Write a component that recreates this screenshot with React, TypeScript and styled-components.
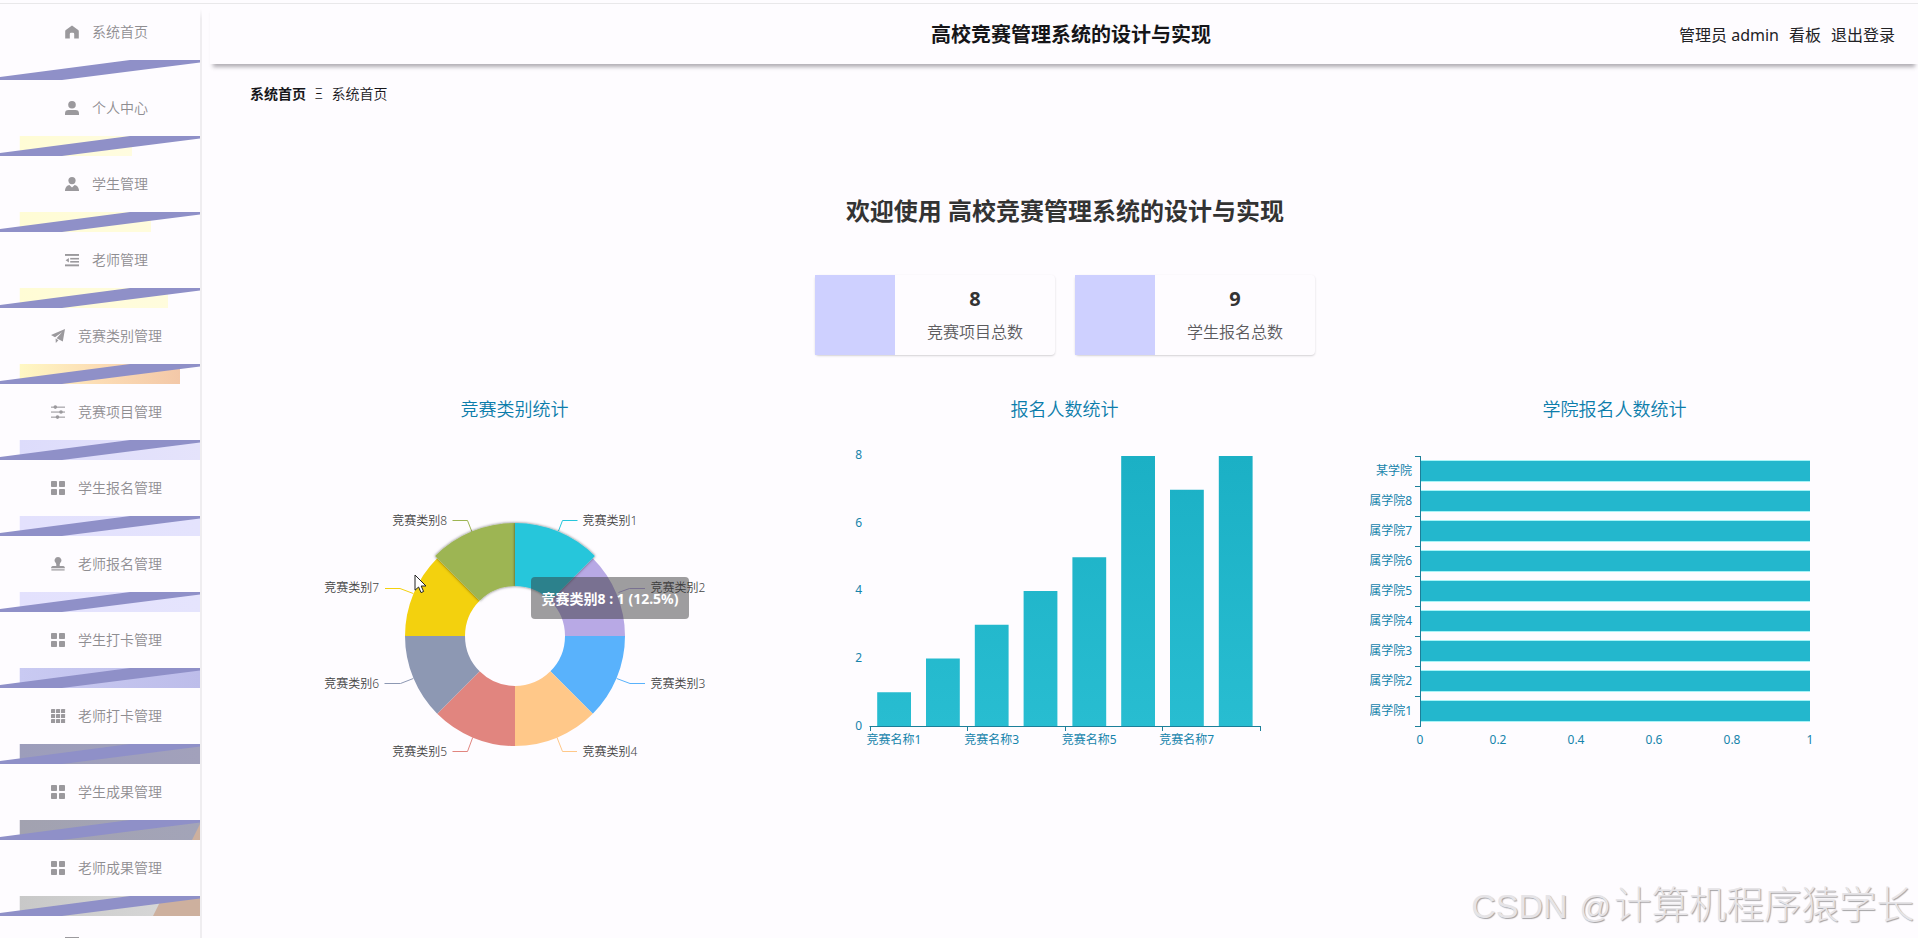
import React from 'react';
import styled, { createGlobalStyle } from 'styled-components';

const FONT = '"Noto Sans", "Noto Sans CJK SC", sans-serif';
const AXIS = '#1684ab';

const GlobalStyle = createGlobalStyle`
  * { box-sizing: border-box; }
  html, body { margin: 0; padding: 0; overflow: hidden; }
  body { background: #fefcff; font-family: ${FONT}; color: #333; }
`;

const Page = styled.div`
  position: relative;
  width: 100%;
  height: 938px;
  padding-top: 3px;
  overflow: hidden;
  display: flex;
  flex-direction: column;
  background: #fefcff;
`;

const TopRule = styled.div`
  flex: none;
  height: 1px;
  background: #e9e8ea;
`;

const Shell = styled.div`
  flex: 1;
  min-height: 0;
  display: flex;
`;

const Sidebar = styled.nav`
  flex: none;
  width: 202px;
  display: flex;
  flex-direction: column;
  overflow: hidden;
  border-right: 2px solid transparent;
  border-image: linear-gradient(to bottom, transparent 6px, #efedf0 16px) 1;
`;

const MenuItem = styled.a`
  flex: none;
  height: 56px;
  padding-left: 8px;
  display: flex;
  align-items: center;
  justify-content: center;
  gap: 8px;
  font-size: 14px;
  line-height: 20px;
  color: #8f8d91;
`;

const MenuIcon = styled.svg`
  width: 24px;
  height: 14px;
  fill: #9b999d;
`;

const MenuLabel = styled.span`
  min-width: 56px;
  font-weight: 350;
`;

const Ribbon = styled.svg`
  flex: none;
  display: block;
  width: 200px;
  height: 20px;
`;

const Main = styled.main`
  flex: 1;
  min-width: 0;
  display: flex;
  flex-direction: column;
`;

const Header = styled.header`
  flex: none;
  height: 60px;
  margin-left: 8px;
  padding: 2px 23px 0 14px;
  display: grid;
  grid-template-columns: 1fr auto 1fr;
  align-items: center;
  box-shadow: 0 6px 4px -3px rgba(60, 55, 65, 0.4);
`;

const SystemTitle = styled.h1`
  grid-column: 2;
  margin: 0 0 0 23px;
  font-size: 20px;
  line-height: 28px;
  font-weight: 700;
  color: #151518;
`;

const UserLinks = styled.div`
  display: flex;
  justify-content: flex-end;
  gap: 10px;
  font-size: 16px;
  line-height: 24px;
  color: #222226;
`;

const Breadcrumb = styled.div`
  flex: none;
  height: 60px;
  padding: 0 0 2px 48px;
  display: flex;
  align-items: center;
  gap: 8.5px;
  font-size: 14px;
  color: #17171b;
`;

const Crumb = styled.span<{ $strong?: boolean }>`
  font-weight: ${(p) => (p.$strong ? 700 : 350)};
`;

const Content = styled.section`
  display: flex;
  flex-direction: column;
  align-items: center;
  padding: 69px 0 0 10px;
`;

const Welcome = styled.h2`
  margin: 0;
  font-size: 24px;
  line-height: 36px;
  font-weight: 700;
  color: #333;
`;

const StatRow = styled.div`
  display: flex;
  gap: 20px;
  margin-top: 46px;
`;

const StatCard = styled.div`
  width: 240px;
  height: 80px;
  display: flex;
  border-radius: 4px;
  background: #fefcff;
  box-shadow: 0 1px 2px rgba(60, 60, 60, 0.22);
`;

const StatSwatch = styled.div`
  width: 80px;
  background: #ced0ff;
`;

const StatBody = styled.div`
  flex: 1;
  display: flex;
  flex-direction: column;
  align-items: center;
  padding-top: 10px;
`;

const StatValue = styled.div`
  font-size: 20px;
  line-height: 28px;
  font-weight: 700;
  color: #333;
`;

const StatLabel = styled.div`
  margin-top: 7px;
  font-size: 16px;
  line-height: 24px;
  font-weight: 350;
  color: #5c5b5e;
`;

const ChartRow = styled.div`
  display: flex;
  gap: 60px;
  margin-top: 41px;
`;

const ChartCard = styled.figure`
  position: relative;
  margin: 0;
  width: 490px;
  height: 400px;
`;

const ChartSvg = styled.svg`
  display: block;
  width: 490px;
  height: 400px;
  overflow: hidden;
  font-family: ${FONT};
  font-size: 12px;
`;

const Tooltip = styled.div`
  position: absolute;
  left: 261px;
  top: 181px;
  width: 158px;
  height: 42px;
  border-radius: 4px;
  background: rgba(50, 50, 50, 0.47);
  color: #fff;
  font-size: 14px;
  line-height: 43px;
  font-weight: 700;
  text-align: center;
  white-space: nowrap;
`;

const Pointer = styled.svg`
  position: absolute;
  left: 144px;
  top: 178px;
  width: 14px;
  height: 21px;
`;

const Watermark = styled.div`
  position: absolute;
  right: 4px;
  bottom: 2px;
  display: flex;
  align-items: baseline;
  font-family: "Liberation Sans", "Noto Sans CJK SC", sans-serif;
  font-size: 37.5px;
  line-height: 56px;
  font-weight: 300;
  color: #e6e4e7;
  text-shadow: 1px 1px 1px #a3a1a4;
  white-space: nowrap;
`;

const WatermarkBrand = styled.span`
  margin-right: 12px;
  font-size: 34px;
`;

const WatermarkAt = styled.span`
  margin-right: 3px;
  font-size: 31px;
`;

const grid4 = (
  <>
    <rect x="0" y="0" width="6" height="6" rx="0.8" />
    <rect x="8" y="0" width="6" height="6" rx="0.8" />
    <rect x="0" y="8" width="6" height="6" rx="0.8" />
    <rect x="8" y="8" width="6" height="6" rx="0.8" />
  </>
);

const icons: Record<string, React.ReactNode> = {
  home: <path d="M7 0.5 L0.8 5 Q0.2 5.5 0.2 6.4 V13.5 H4.8 V9 Q4.8 7.8 6 7.8 H8 Q9.2 7.8 9.2 9 V13.5 H13.8 V6.4 Q13.8 5.5 13.2 5 Z" />,
  user: (
    <>
      <circle cx="7" cy="3.8" r="3.8" />
      <path d="M0 14 V12.4 Q0 9 3.6 9 H10.4 Q14 9 14 12.4 V14 Z" />
    </>
  ),
  custom: (
    <>
      <circle cx="7" cy="3.6" r="3.6" />
      <path d="M0 14 V13 Q0.8 8.6 4.4 8 L7 10.6 L9.6 8 Q13.2 8.6 14 13 V14 Z" />
    </>
  ),
  fold: (
    <>
      <rect x="0" y="1" width="14" height="1.9" />
      <rect x="5.2" y="4.9" width="8.8" height="1.6" />
      <rect x="5.2" y="8" width="8.8" height="1.6" />
      <rect x="0" y="11.4" width="14" height="1.9" />
      <path d="M0.6 7.2 L3.9 4.9 V9.6 Z" />
    </>
  ),
  promotion: (
    <>
      <path d="M14 0 L0 6 L4 8.3 L11 3.2 L5.6 9.2 L11.8 12.6 Z" />
      <path d="M4.6 9.6 L7.4 11.2 L4.8 14 Z" />
    </>
  ),
  operation: (
    <>
      <rect x="0" y="1.6" width="14" height="1.1" />
      <rect x="0" y="6.5" width="14" height="1.1" />
      <rect x="0" y="11.6" width="14" height="1.1" />
      <circle cx="4.3" cy="2.1" r="1.8" />
      <circle cx="10" cy="7" r="1.8" />
      <circle cx="6.5" cy="12.1" r="1.8" />
    </>
  ),
  menu: grid4,
  stamp: (
    <>
      <path d="M7 0 A3.4 3.4 0 0 1 9.2 6 Q8.4 7.6 8.8 9 H12.4 Q14 9.2 14 11.2 H0 Q0 9.2 1.6 9 H5.2 Q5.6 7.6 4.8 6 A3.4 3.4 0 0 1 7 0 Z" />
      <rect x="0.4" y="12.3" width="13.2" height="1.2" />
    </>
  ),
  grid: (
    <>
      {[0, 5, 10].map((y) =>
        [0, 5, 10].map((x) => <rect key={`${x}-${y}`} x={x} y={y} width="4.1" height="4.1" rx="0.4" />)
      )}
    </>
  ),
  tray: <rect x="0" y="0" width="14" height="2" />,
};

type Backdrop = { stops: string[]; end: number; skin?: number };
type Entry = { icon: string; label: string; backdrop?: Backdrop };

const entries: Entry[] = [
  { icon: 'home', label: '系统首页' },
  { icon: 'user', label: '个人中心', backdrop: { stops: ['#fffcd5', '#fffce0'], end: 132 } },
  { icon: 'custom', label: '学生管理', backdrop: { stops: ['#fffcd5', '#fffcdd'], end: 151 } },
  { icon: 'fold', label: '老师管理', backdrop: { stops: ['#fffcd5', '#fffcdd'], end: 168 } },
  { icon: 'promotion', label: '竞赛类别管理', backdrop: { stops: ['#fff8c4', '#fcdcb4', '#f3c8a8'], end: 180 } },
  { icon: 'operation', label: '竞赛项目管理', backdrop: { stops: ['#dddcfb', '#e5e3fb'], end: 200 } },
  { icon: 'menu', label: '学生报名管理', backdrop: { stops: ['#e3e1fd', '#e4e3fd'], end: 200 } },
  { icon: 'stamp', label: '老师报名管理', backdrop: { stops: ['#e3e1fd', '#e5e4fd'], end: 200 } },
  { icon: 'menu', label: '学生打卡管理', backdrop: { stops: ['#c9caf2', '#bdbdea'], end: 200 } },
  { icon: 'grid', label: '老师打卡管理', backdrop: { stops: ['#9c9dbb', '#a2a1bb'], end: 200 } },
  { icon: 'menu', label: '学生成果管理', backdrop: { stops: ['#a2a2b0', '#a3a4b8'], end: 200, skin: 192 } },
  { icon: 'menu', label: '老师成果管理', backdrop: { stops: ['#c8c8c8', '#dadada'], end: 200, skin: 153 } },
  { icon: 'tray', label: '' },
];

function Divider({ backdrop, id }: { backdrop?: Backdrop; id: string }) {
  return (
    <Ribbon viewBox="0 0 200 20">
      {backdrop && (
        <>
          <defs>
            <linearGradient id={id}>
              {backdrop.stops.map((c, i) => (
                <stop key={i} offset={i / (backdrop.stops.length - 1)} stopColor={c} />
              ))}
            </linearGradient>
          </defs>
          <rect x="19.5" y="0" width={backdrop.end - 19.5} height="20" fill={`url(#${id})`} />
          <path d="M0 0 H19.5 V20 H0 Z M19.5 14.4 V20 H0 V17 Z" fill="#fefcff" />
          {backdrop.skin && (
            <path d={`M${backdrop.skin} 20 L${backdrop.skin + 10} 0 H200 V20 Z`} fill="#cdb09e" />
          )}
        </>
      )}
      <path d="M0 17 L130 0 H200 V2.6 L62 20 H0 Z" fill="#8f90c8" />
    </Ribbon>
  );
}

const CX = 245;
const CY = 240;

function sector(index: number, outer: number, inner = 50) {
  const a0 = (index * Math.PI) / 4;
  const a1 = a0 + Math.PI / 4;
  const pt = (a: number, r: number) => `${(CX + r * Math.sin(a)).toFixed(2)} ${(CY - r * Math.cos(a)).toFixed(2)}`;
  return `M${pt(a0, inner)} L${pt(a0, outer)} A${outer} ${outer} 0 0 1 ${pt(a1, outer)} L${pt(a1, inner)} A${inner} ${inner} 0 0 0 ${pt(a0, inner)} Z`;
}

type Slice = { color: string; line: string; x: number; y: number; end?: boolean };

const slices: Slice[] = [
  { color: '#27c6db', line: '288.5,135 292.5,124.5 307.5,124.5', x: 312.5, y: 124 },
  { color: '#b8a9e5', line: '348.5,196.5 359.5,192.5 375,192.5', x: 380.5, y: 191 },
  { color: '#59b2fc', line: '346.7,282.5 360,287.5 375,287.5', x: 380.5, y: 287 },
  { color: '#ffc889', line: '287,341.5 292.5,355.5 307,355.5', x: 312.5, y: 355 },
  { color: '#e1857f', line: '202.7,341.5 197.5,355.5 182.5,355.5', x: 177, y: 355, end: true },
  { color: '#8d98b3', line: '143.3,282.5 130.5,287.5 114.5,287.5', x: 109, y: 287, end: true },
  { color: '#f3d10e', line: '143.3,197.5 130,192.5 115,192.5', x: 109, y: 191, end: true },
  { color: '#9db553', line: '202,136 197.5,124.5 182.5,124.5', x: 177, y: 124, end: true },
];

function ChartTitle({ children }: { children: string }) {
  return (
    <text x="244.5" y="19.5" fontSize="18" fill="#0c7dab" textAnchor="middle" fontWeight="350">
      {children}
    </text>
  );
}

function PieChart() {
  const emphasised = [7, 0];
  return (
    <ChartCard>
      <ChartSvg viewBox="0 0 490 400">
        <defs>
          <filter id="glow" x="-20%" y="-20%" width="140%" height="140%">
            <feDropShadow dx="0" dy="0" stdDeviation="1.5" floodColor="#000" floodOpacity="0.6" />
          </filter>
        </defs>
        <ChartTitle>竞赛类别统计</ChartTitle>
        {slices.map((s, i) => (
          <g key={i}>
            <polyline points={s.line} fill="none" stroke={s.color} strokeWidth="1" />
            <text x={s.x} y={s.y + 4.5} fill="#444" textAnchor={s.end ? 'end' : 'start'} fontWeight="350">
              {`竞赛类别${i + 1}`}
            </text>
          </g>
        ))}
        {slices.map((s, i) => !emphasised.includes(i) && <path key={i} d={sector(i, 110)} fill={s.color} />)}
        {[7, 0].map((i) => (
          <path key={i} d={sector(i, 113)} fill={slices[i].color} filter="url(#glow)" />
        ))}
      </ChartSvg>
      <Tooltip>竞赛类别8 : 1 (12.5%)</Tooltip>
      <Pointer viewBox="0 0 14 21">
        <path d="M1 1 V16.2 L4.6 13 L7 18.6 L9.6 17.5 L7.2 12 H12 Z" fill="#fff" stroke="#222" strokeWidth="1" />
      </Pointer>
    </ChartCard>
  );
}

function SignupChart() {
  const values = [1, 2, 3, 4, 5, 8, 7, 8];
  const step = 48.8;
  return (
    <ChartCard>
      <ChartSvg viewBox="0 0 490 400">
        <defs>
          <linearGradient id="bars" x1="0" y1="60" x2="0" y2="330" gradientUnits="userSpaceOnUse">
            <stop offset="0" stopColor="#1bb0c5" />
            <stop offset="1" stopColor="#28bdd1" />
          </linearGradient>
        </defs>
        <ChartTitle>报名人数统计</ChartTitle>
        {[0, 2, 4, 6, 8].map((v) => (
          <text key={v} x="42" y={333.5 - v * 33.8} fill={AXIS} textAnchor="end">
            {v}
          </text>
        ))}
        {values.map((v, i) => (
          <rect key={i} x={57.2 + i * step} y={330 - v * 33.75} width="33.8" height={v * 33.75} fill="url(#bars)" />
        ))}
        <path
          d="M49.5 330.5 H441 M50.5 330 V335 M147.5 330 V335 M245.5 330 V335 M342.5 330 V335 M440.5 330 V335"
          stroke="#1c7f99"
          fill="none"
        />
        {[1, 3, 5, 7].map((n, i) => (
          <text key={n} x={74 + i * step * 2} y="347.5" fill={AXIS} textAnchor="middle">
            {`竞赛名称${n}`}
          </text>
        ))}
      </ChartSvg>
    </ChartCard>
  );
}

function CollegeChart() {
  const rows = ['某学院', ...[8, 7, 6, 5, 4, 3, 2, 1].map((n) => `所属学院${n}`)];
  return (
    <ChartCard>
      <ChartSvg viewBox="0 0 490 400">
        <ChartTitle>学院报名人数统计</ChartTitle>
        {rows.map((name, i) => (
          <g key={name}>
            <rect x="50" y={64 + i * 30} width="390" height="22" fill="#a8f4f7" />
            <rect x="50" y={65 + i * 30} width="390" height="20" fill="#23b7cd" />
            <text x="42" y={78.5 + i * 30} fill={AXIS} textAnchor="end">
              {name}
            </text>
          </g>
        ))}
        <path
          d={`M50.5 60 V331 ${Array.from({ length: 10 }, (_, i) => `M45 ${60.5 + i * 30} H50`).join(' ')}`}
          stroke="#1c7f99"
          fill="none"
        />
        {['0', '0.2', '0.4', '0.6', '0.8', '1'].map((v, i) => (
          <text key={v} x={50 + i * 78} y="347.5" fill={AXIS} textAnchor="middle">
            {v}
          </text>
        ))}
      </ChartSvg>
    </ChartCard>
  );
}

export default function App() {
  return (
    <Page>
      <GlobalStyle />
      <TopRule />
      <Shell>
        <Sidebar>
          {entries.map((e, i) => (
            <React.Fragment key={i}>
              <MenuItem>
                <MenuIcon viewBox="-5 0 24 14">{icons[e.icon]}</MenuIcon>
                <MenuLabel>{e.label}</MenuLabel>
              </MenuItem>
              <Divider backdrop={e.backdrop} id={`ribbon-${i}`} />
            </React.Fragment>
          ))}
        </Sidebar>
        <Main>
          <Header>
            <SystemTitle>高校竞赛管理系统的设计与实现</SystemTitle>
            <UserLinks>
              <span>管理员 admin</span>
              <span>看板</span>
              <span>退出登录</span>
            </UserLinks>
          </Header>
          <Breadcrumb>
            <Crumb $strong>系统首页</Crumb>
            <Crumb>Ξ</Crumb>
            <Crumb>系统首页</Crumb>
          </Breadcrumb>
          <Content>
            <Welcome>欢迎使用 高校竞赛管理系统的设计与实现</Welcome>
            <StatRow>
              <StatCard>
                <StatSwatch />
                <StatBody>
                  <StatValue>8</StatValue>
                  <StatLabel>竞赛项目总数</StatLabel>
                </StatBody>
              </StatCard>
              <StatCard>
                <StatSwatch />
                <StatBody>
                  <StatValue>9</StatValue>
                  <StatLabel>学生报名总数</StatLabel>
                </StatBody>
              </StatCard>
            </StatRow>
            <ChartRow>
              <PieChart />
              <SignupChart />
              <CollegeChart />
            </ChartRow>
          </Content>
        </Main>
      </Shell>
      <Watermark>
        <WatermarkBrand>CSDN</WatermarkBrand>
        <WatermarkAt>@</WatermarkAt>
        <span>计算机程序猿学长</span>
      </Watermark>
    </Page>
  );
}
